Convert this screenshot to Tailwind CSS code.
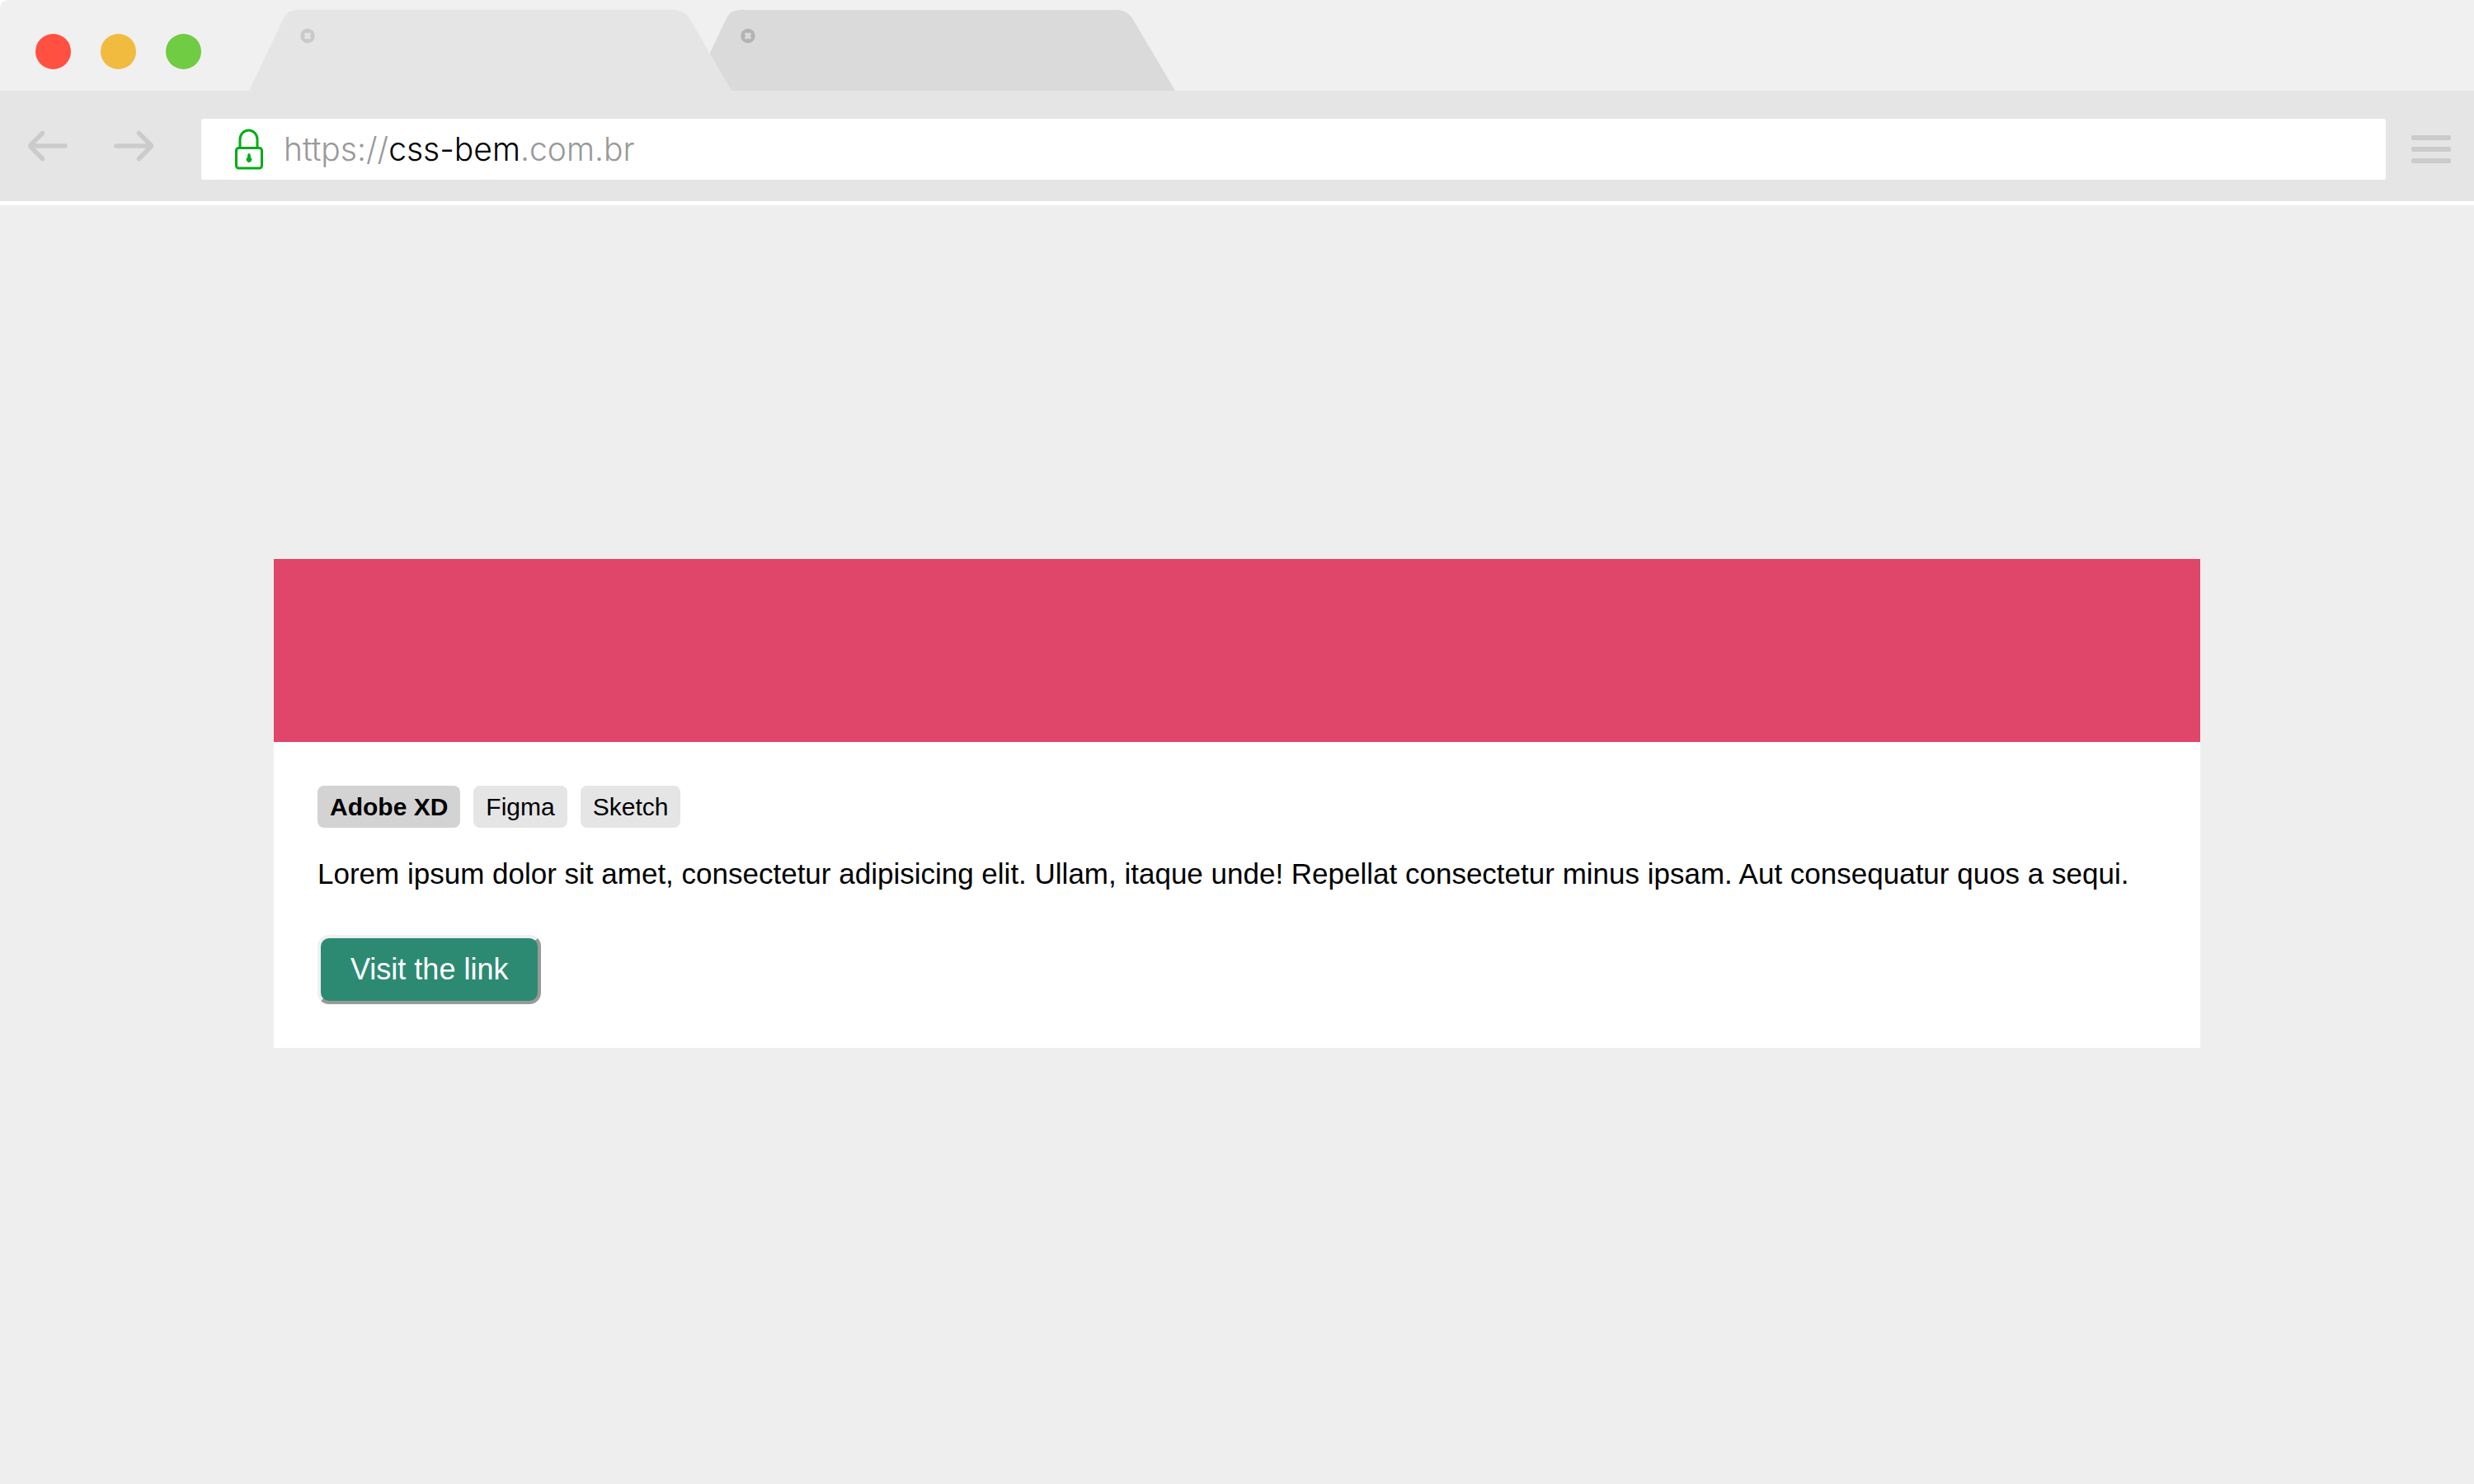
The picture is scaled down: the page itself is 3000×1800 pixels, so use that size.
<!DOCTYPE html>
<html lang="en">
<head>
<meta charset="utf-8">
<title>css-bem.com.br</title>
<script src="https://cdn.jsdelivr.net/npm/@tailwindcss/browser@4"></script>
</head>
<body class="min-h-screen bg-[#eeeeee] font-['Liberation_Sans',Arial,sans-serif] text-black">
  <header>
    <div class="bg-white">
      <div class="flex h-[110px] rounded-tl-[10px] bg-[#f0f0f0]">
        <div class="flex items-center gap-9 pt-3.5 pl-[43px]">
          <button type="button" aria-label="Close window" class="size-[43px] rounded-full bg-[#ff5041]"></button>
          <button type="button" aria-label="Minimise window" class="size-[43px] rounded-full bg-[#f1bb3f]"></button>
          <button type="button" aria-label="Maximise window" class="size-[43px] rounded-full bg-[#70cc42]"></button>
        </div>
        <nav aria-label="Tabs" class="ml-14 flex items-end">
          <svg width="1126" height="98" viewBox="300 12 1126 98" aria-hidden="true">
            <path fill="#dadada" d="M887 110L860 66L881 22Q886 12 898 12H1354Q1366 12 1373 22L1425 110Z"/>
            <path fill="#e5e5e5" d="M302 110L344 22Q349 12 361 12H817Q829 12 836 22L887 110Z"/>
            <circle cx="373" cy="43.500" r="8.700" fill="#c9c9c9"/>
            <path stroke="#e5e5e5" stroke-width="3.500" d="M369.800 40.300l6.400 6.400M376.200 40.300l-6.400 6.400"/>
            <circle cx="907" cy="43.500" r="8.700" fill="#b3b3b3"/>
            <path stroke="#dadada" stroke-width="3.500" d="M903.800 40.300l6.400 6.400M910.200 40.300l-6.400 6.400"/>
          </svg>
        </nav>
      </div>
    </div>
    <div class="flex h-[139px] items-center border-b-[5px] border-white bg-[#e5e5e5] pt-2 pr-7 pl-[34px]">
      <div class="flex gap-14 pb-2">
        <button type="button" aria-label="Back">
          <svg width="48" height="38" viewBox="0 0 48 38" fill="none" stroke="#cbcbcb" stroke-width="5.500" stroke-linecap="round" stroke-linejoin="round"><path d="M45 19H3M17.500 3.500L3.500 17.500Q2 19 3.500 20.500L17.500 34.500"/></svg>
        </button>
        <button type="button" aria-label="Forward">
          <svg width="48" height="38" viewBox="0 0 48 38" fill="none" stroke="#cbcbcb" stroke-width="5.500" stroke-linecap="round" stroke-linejoin="round"><path d="M3 19H45M30.500 3.500L44.500 17.500Q46 19 44.500 20.500L30.500 34.500"/></svg>
        </button>
      </div>
      <div class="ml-[58px] flex h-[74px] grow items-center rounded-[3px] bg-white pl-10">
        <svg width="36" height="50" viewBox="0 0 36 50" fill="none" stroke="#00ac17" stroke-width="3" aria-hidden="true">
          <rect x="2.500" y="23.500" width="31" height="24.500" rx="3"/>
          <path d="M7 23V13a10.500 11 0 0 1 21 0V23"/>
          <path fill="#00ac17" stroke="none" d="M16.500 31q1.500-2 3 0l.5 4a3.200 3.200 0 1 1-4 0z"/>
        </svg>
        <div role="textbox" aria-label="Address" contenteditable="true" class="ml-6 font-[Inter,sans-serif] text-[39px] leading-[48px] font-light whitespace-nowrap text-[#999999]">https://<span class="text-black">css-bem</span>.com.br</div>
      </div>
      <button type="button" aria-label="Menu" class="ml-[31px] flex flex-col gap-2">
        <span class="h-1.5 w-12 rounded-[2px] bg-[#cbcbcb]"></span>
        <span class="h-1.5 w-12 rounded-[2px] bg-[#cbcbcb]"></span>
        <span class="h-1.5 w-12 rounded-[2px] bg-[#cbcbcb]"></span>
      </button>
    </div>
  </header>
  <main class="px-[332px] pt-[429px]">
    <article class="bg-white">
      <div class="h-[222px] bg-[#e04669]"></div>
      <div class="p-[53px]">
        <ul class="flex gap-4 text-[30px] leading-[51px]">
          <li class="rounded-lg bg-[#d3d3d3] px-[15px] font-bold">Adobe XD</li>
          <li class="rounded-lg bg-[#e5e5e5] px-[15px]">Figma</li>
          <li class="rounded-lg bg-[#e5e5e5] px-[15px]">Sketch</li>
        </ul>
        <p class="mt-[34px] text-[35px] leading-[44px]">Lorem ipsum dolor sit amet, consectetur adipisicing elit. Ullam, itaque unde! Repellat consectetur minus ipsam. Aut consequatur quos a sequi.</p>
        <button type="button" class="mt-[52px] block rounded-[14px] border-4 border-t-[#f0f0f0] border-r-[#999999] border-b-[#999999] border-l-[#f0f0f0] bg-[#2d8a72] px-9 py-4 text-[36px] leading-[44px] text-white">Visit the link</button>
      </div>
    </article>
  </main>
</body>
</html>
